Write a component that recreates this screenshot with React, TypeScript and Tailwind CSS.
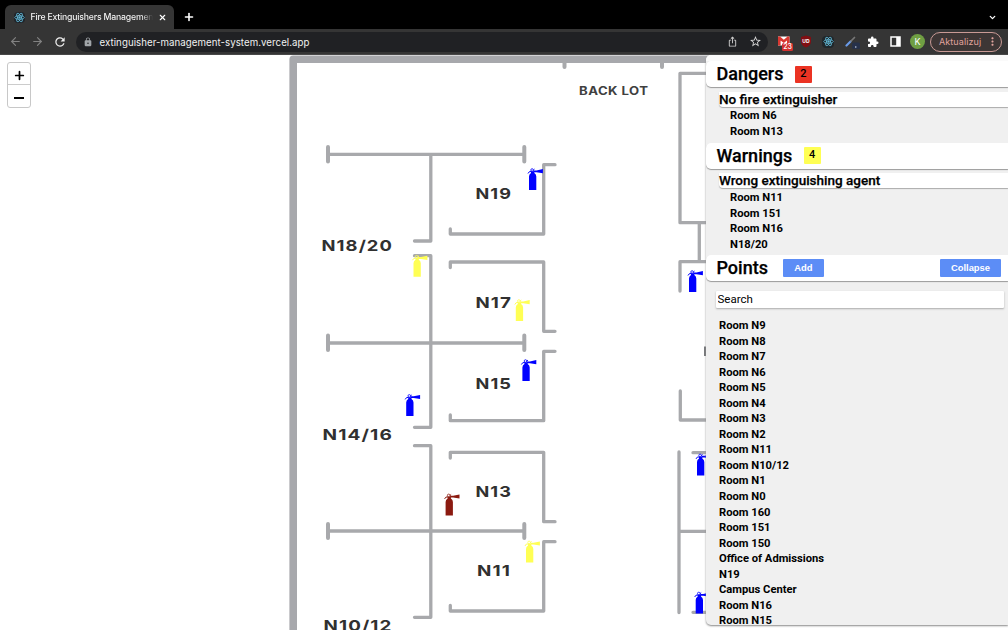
import React from "react";
import { ArrowLeft, ArrowRight, ChevronDown, Plus, X } from "lucide-react";
import { MdLock, MdExtension, MdRefresh, MdStarBorder, MdMoreVert, MdIosShare } from "react-icons/md";

const ink = '"Roboto", sans-serif';

type Pin = { x: number; y: number; color: string };

const pins: Pin[] = [
  { x: 529, y: 168.3, color: "#0000ff" },
  { x: 413.5, y: 255, color: "#ffff54" },
  { x: 515.8, y: 299.3, color: "#ffff54" },
  { x: 522.4, y: 359.3, color: "#0000ff" },
  { x: 406.2, y: 394.2, color: "#0000ff" },
  { x: 445.6, y: 493.7, color: "#8b1a10" },
  { x: 526, y: 540.7, color: "#ffff54" },
  { x: 689, y: 270.3, color: "#0000ff" },
  { x: 697, y: 453.7, color: "#0000ff" },
  { x: 695.7, y: 591.8, color: "#0000ff" },
];

const labels = [
  { text: "N19", x: 475.5, y: 199.2, w: 36.5 },
  { text: "N18/20", x: 321.5, y: 250.6, w: 71.5 },
  { text: "N17", x: 475.5, y: 307.6, w: 36.5 },
  { text: "N15", x: 475.5, y: 388.6, w: 36.5 },
  { text: "N14/16", x: 322.5, y: 440, w: 70.5 },
  { text: "N13", x: 475.5, y: 497, w: 36.5 },
  { text: "N11", x: 477, y: 575.6, w: 34 },
  { text: "N10/12", x: 323.5, y: 631.2, w: 69 },
];

const walls = [
  "M328 154.3H524M430.8 154.3V241H414.5",
  "M543.7 234V164.7H555M543.7 234H450.3V229",
  "M414.5 255.7H430.8V427.3H414.5M328 343H524",
  "M450.3 267.5V262H543.7V331.3H555",
  "M555 351.3H543.7V420.7H450.3V415",
  "M414.5 445.7H430.8V617.3H414.5M328 531H524",
  "M450.3 458V452.3H543.7V521.7H555",
  "M555 541.7H543.7V611H450.3V605.5",
  "M720 73.3H680V222.7H720M699.3 222.7V261.7M720 261.7H680V291",
  "M680.3 391V420H720M679 452V612.5M693 452.7H720M679 531.3H720M693 612.3H720",
];

const caps = [
  "M328 147V161.5M524.3 147V161.5",
  "M328 335.5V350M524.3 335.5V350",
  "M328 524V538M524.3 524V538",
  "M564.5 62V67M662 62V67",
];

function Extinguisher({ x, y, color }: Pin) {
  return (
    <g transform={`translate(${x} ${y})`} fill={color}>
      <path d="M0 21.7V8.2Q0 6 2 4.8V3H5.3V4.8Q7.3 6 7.3 8.2V21.7Z" />
      <path d="M4.5 2.1L7.5 2.1L13.9 0.7V4.9L7.5 3.9L4.5 3.9Z" />
      <circle cx="3.1" cy="1.7" r="1.3" fill="none" stroke={color} strokeWidth="0.8" />
      <path d="M2.4 3.2Q0 2.6 -1 5.2M4.2 2L5.5 0.8" fill="none" stroke={color} strokeWidth="1" />
    </g>
  );
}

function FloorPlan() {
  return (
    <svg className="block h-[575px] w-[1008px]" viewBox="0 55 1008 575">
      <path d="M293.2 640V59.3H740" fill="none" stroke="#a7a8ac" strokeWidth="7.6" strokeLinejoin="round" />
      <g fill="none" stroke="#a8a9ac" strokeWidth="3.3" strokeLinecap="round" strokeLinejoin="round">
        {walls.map((d) => <path key={d} d={d} />)}
      </g>
      <g fill="none" stroke="#a8a9ac" strokeWidth="4" strokeLinecap="round">
        {caps.map((d) => <path key={d} d={d} />)}
      </g>
      <path d="M704 346.5H708V356H704Z" fill="#77787b" />
      <g fill="#303030" fontFamily="Inter, sans-serif" fontWeight="700" fontSize="15.2" letterSpacing="0.9">
        {labels.map((l) => (
          <text key={l.text} x={l.x} y={l.y} textLength={l.w} lengthAdjust="spacingAndGlyphs">{l.text}</text>
        ))}
      </g>
      <text x="579" y="95" textLength="69.5" lengthAdjust="spacingAndGlyphs" letterSpacing="0.4" fill="#404040" fontFamily="Inter, sans-serif" fontWeight="700" fontSize="11.2">BACK LOT</text>
      {pins.map((p) => <Extinguisher key={`${p.x}-${p.y}`} {...p} />)}
    </svg>
  );
}

function ReactLogo({ className }: { className: string }) {
  return (
    <svg className={className} viewBox="0 0 24 24" fill="none" stroke="#61b8d6" strokeWidth="1.7">
      <ellipse cx="12" cy="12" rx="10.5" ry="4" />
      <ellipse cx="12" cy="12" rx="10.5" ry="4" transform="rotate(60 12 12)" />
      <ellipse cx="12" cy="12" rx="10.5" ry="4" transform="rotate(120 12 12)" />
      <circle cx="12" cy="12" r="1.8" fill="#61b8d6" />
    </svg>
  );
}

function BrowserChrome() {
  return (
    <header className="h-[55px] bg-black text-white" style={{ fontFamily: "Inter, sans-serif" }}>
      <div className="flex h-[29px] items-end justify-between pl-[5px]">
        <div className="flex h-6 items-center">
          <div className="flex h-6 w-[169px] items-center rounded-t-md bg-[#353535] pl-[9px]">
            <span className="flex h-[11px] w-[11px] items-center justify-center rounded-sm bg-[#20252b]">
              <ReactLogo className="h-[11px] w-[11px]" />
            </span>
            <span className="ml-[5.5px] w-[122px] bg-linear-to-r from-white from-90% to-transparent bg-clip-text text-[8.7px] leading-3 font-medium tracking-[-0.022em] whitespace-nowrap text-transparent">
              Fire Extinguishers Managemen
            </span>
            <X className="ml-[5px] h-[9px] w-[9px]" strokeWidth={3} />
          </div>
          <Plus className="ml-[9px] h-[12px] w-[12px]" strokeWidth={3.2} />
        </div>
        <ChevronDown className="mr-[11px] mb-[7px] h-[9px] w-[9px]" strokeWidth={3.4} />
      </div>
      <div className="flex h-[26px] items-center border-b border-[#484848] bg-[#353535] pl-[9px]">
        <ArrowLeft className="h-[13px] w-[13px] text-[#828282]" strokeWidth={2.1} />
        <ArrowRight className="ml-[9px] h-[13px] w-[13px] text-[#828282]" strokeWidth={2.1} />
        <MdRefresh className="ml-[9px] h-[14px] w-[14px] text-[#eeeeee]" />
        <div className="ml-[9px] flex h-5 w-[692px] shrink-0 items-center rounded-full bg-[#202124] pl-[7px]">
          <MdLock className="h-[10px] w-[10px] shrink-0 text-[#a1a5a9]" />
          <span className="ml-[6.5px] w-[240px] shrink-0 pt-[2px] text-[9.7px] leading-4 tracking-[0.005em] whitespace-nowrap text-[#f1f1f1]">extinguisher-management-system.vercel.app</span>
          <MdIosShare className="ml-[387.5px] h-[11px] w-[11px] shrink-0 text-[#cfcfcf]" />
          <MdStarBorder className="ml-[10.5px] h-[13px] w-[13px] shrink-0 text-[#d8d8d8]" />
        </div>
        <div className="relative ml-[10px] h-[14px] w-[15px]">
          <svg className="h-[14px] w-[15px]" viewBox="0 0 15 14">
            <path d="M0 1.5H11.5V10.5H0Z" fill="#fff" />
            <path d="M0 1.5H2.6V10.5H0ZM9 1.5H11.5V10.5H9ZM0 1.5H2L5.8 4.7L9.6 1.5H11.5V3.5L5.8 8L0 3.5Z" fill="#d93831" />
          </svg>
          <span className="absolute top-[8px] left-[4px] flex h-[8px] w-[11px] items-center justify-center rounded-[1.5px] bg-[#d33130] text-[7px] leading-none font-medium">23</span>
        </div>
        <div className="relative ml-[7px] flex h-[13px] w-[12px] items-center justify-center">
          <svg className="absolute h-[13px] w-[12px]" viewBox="0 0 12 13">
            <path d="M6 .5L11 2V6.5Q11 10.5 6 12.5Q1 10.5 1 6.5V2Z" fill="#800f13" />
          </svg>
          <span className="relative text-[5px] leading-none font-bold">UD</span>
        </div>
        <span className="ml-[10px] flex h-3 w-3 items-center justify-center rounded-sm bg-[#20272b]">
          <ReactLogo className="h-[11px] w-[11px]" />
        </span>
        <svg className="ml-[11px] h-[14px] w-[15px]" viewBox="0 0 15 14">
          <rect x="7" y="7.5" width="8" height="6.5" rx="1.5" fill="#26314a" />
          <path d="M1.5 10.5L5.5 6.5" stroke="#6a9be8" strokeWidth="2.2" strokeLinecap="round" />
          <path d="M6 6L9.5 2.5" stroke="#777" strokeWidth="1.7" strokeLinecap="round" />
          <circle cx="10.8" cy="12" r=".7" fill="#dfe8ff" />
        </svg>
        <MdExtension className="ml-[7px] h-[12px] w-[12px]" />
        <svg className="ml-[11px] h-[11px] w-[11px]" viewBox="0 0 11 11">
          <path d="M1 1H10V10H1Z" fill="none" stroke="#fff" strokeWidth="1.5" />
          <path d="M6.2 1H10V10H6.2Z" fill="#fff" />
        </svg>
        <span className="ml-[9px] flex h-[15px] w-[15px] items-center justify-center rounded-full bg-[#6f9f43] text-[9px] leading-none">K</span>
        <div className="ml-[5px] flex h-5 w-[72px] items-center rounded-full border border-[#c99a95] bg-[#3d3635] pl-[8px] text-[9px] text-[#e0a39d]">
          <span className="w-[43px] pt-[1px] leading-3 tracking-[0.01em]">Aktualizuj</span>
          <MdMoreVert className="ml-[3.5px] h-[13px] w-[13px] shrink-0" />
        </div>
      </div>
    </header>
  );
}

function SectionHeader({ title, children }: { title: string; children: React.ReactNode }) {
  return (
    <div className="flex h-[26px] shrink-0 items-center rounded-l-[5px] bg-white pl-[10.5px] shadow-[0_1px_1px_#999]">
      <h2 className="text-[18px] leading-[26px] font-medium [-webkit-text-stroke:0.25px_black]">{title}</h2>
      {children}
    </div>
  );
}

function SubHeader({ children }: { children: string }) {
  return (
    <h3 className="ml-[13px] h-[15px] rounded-bl-[4px] bg-white text-[13.5px] leading-[15px] font-medium whitespace-nowrap [-webkit-text-stroke:0.25px_black] shadow-[0_1px_1px_#aaa]">{children}</h3>
  );
}

function Rooms({ items, className }: { items: string[]; className: string }) {
  return (
    <ul className={className}>
      {items.map((item) => (
        <li key={item} className="h-[15.55px] text-[11.2px] leading-[15.55px] font-bold whitespace-nowrap">{item}</li>
      ))}
    </ul>
  );
}

const points = [
  "Room N9", "Room N8", "Room N7", "Room N6", "Room N5", "Room N4", "Room N3", "Room N2", "Room N11", "Room N10/12",
  "Room N1", "Room N0", "Room 160", "Room 151", "Room 150", "Office of Admissions", "N19", "Campus Center", "Room N16", "Room N15",
];

function Sidebar() {
  return (
    <aside className="absolute top-0 right-0 flex h-[570px] w-[302px] flex-col overflow-hidden rounded-l-[5px] bg-[#f0f0f0] text-black shadow-[0_1px_2px_#888]" style={{ fontFamily: ink }}>
      <div className="h-[6px] shrink-0 bg-[#fafafa]" />
      <section className="h-[81.5px] shrink-0">
        <SectionHeader title="Dangers">
          <span className="ml-[11.5px] flex h-[17px] w-[17px] items-center justify-center rounded-[1px] bg-[#eb3323] text-[11px] font-medium">2</span>
        </SectionHeader>
        <div className="h-[4.6px]" />
        <SubHeader>No fire extinguisher</SubHeader>
        <Rooms className="mt-[1.9px] ml-6" items={["Room N6", "Room N13"]} />
      </section>
      <section className="h-[112.3px] shrink-0">
        <SectionHeader title="Warnings">
          <span className="ml-[11.5px] flex h-[17px] w-[17px] items-center justify-center rounded-[1px] bg-[#ffff54] text-[11px] font-medium">4</span>
        </SectionHeader>
        <div className="h-[4.3px]" />
        <SubHeader>Wrong extinguishing agent</SubHeader>
        <Rooms className="mt-[2.2px] ml-6" items={["Room N11", "Room 151", "Room N16", "N18/20"]} />
      </section>
      <section>
        <SectionHeader title="Points">
          <button className="ml-[15px] h-[17.5px] w-[41px] rounded-[1px] bg-[#5c8df6] text-[9.4px] leading-[17px] font-bold text-white" style={{ fontFamily: '"Liberation Sans", sans-serif' }}>Add</button>
          <button className="mr-[7px] ml-auto h-[17.5px] w-[61px] rounded-[1px] bg-[#5c8df6] text-[9.4px] leading-[17px] font-bold text-white" style={{ fontFamily: '"Liberation Sans", sans-serif' }}>Collapse</button>
        </SectionHeader>
        <input aria-label="Search" placeholder="Search" className="mt-[10px] ml-[9.5px] block h-[17px] w-[288.5px] rounded-[1px] bg-white px-[2px] text-[11.5px] leading-[17px] text-black shadow-[0_1px_2px_#aaa] placeholder:text-black" />
        <Rooms className="mt-[10.2px] ml-[13px]" items={points} />
      </section>
    </aside>
  );
}

export default function App() {
  return (
    <div className="h-[630px] w-[1008px] overflow-hidden bg-white">
      <BrowserChrome />
      <main className="relative h-[575px] overflow-hidden">
        <FloorPlan />
        <div className="absolute top-[7px] left-[7px] flex h-[46px] w-6 flex-col overflow-hidden rounded-[3px] border border-[#c8c8c8] bg-white text-black">
          <button aria-label="Zoom in" className="flex h-[22px] shrink-0 items-center justify-center border-b border-[#ccc] pt-[4px]"><Plus className="h-[13px] w-[13px]" strokeWidth={3.2} /></button>
          <button aria-label="Zoom out" className="flex h-[22px] shrink-0 items-center justify-center pt-[4px]">
            <span className="h-[2px] w-[10px] bg-black" />
          </button>
        </div>
        <Sidebar />
      </main>
    </div>
  );
}
